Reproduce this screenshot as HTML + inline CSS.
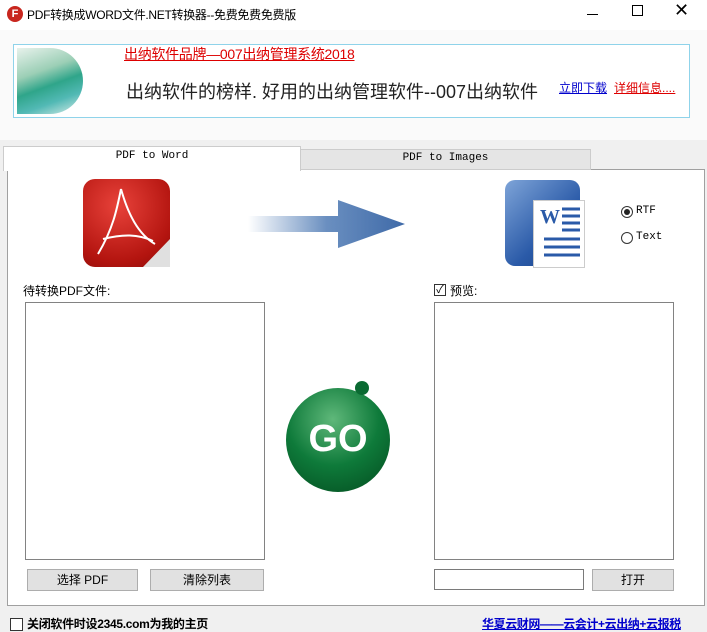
<!DOCTYPE html>
<html><head><meta charset="utf-8"><style>
*{margin:0;padding:0;box-sizing:border-box}
body{width:707px;height:630px;background:#f0f0f0;position:relative;overflow:hidden;font-family:"Liberation Sans","Noto Sans CJK SC",sans-serif;font-size:12px;color:#000}
.a{position:absolute}
.mono{font-family:"Liberation Mono","Noto Sans CJK SC",monospace}
.btn{position:absolute;background:#e1e1e1;border:1px solid #adadad;text-align:center;line-height:20px;font-size:12px}
.box{position:absolute;background:#fff;border:1px solid #828282}
</style></head><body>
<div class="a" style="left:0;top:0;width:707px;height:30px;background:#fff"></div>
<div class="a" style="left:7px;top:6px;width:16px;height:16px;border-radius:50%;background:#c8261e;color:#fff;font-size:11px;font-weight:bold;text-align:center;line-height:16px">F</div>
<div class="a" style="left:27px;top:6px;font-size:12px;letter-spacing:-0.3px">PDF转换成WORD文件.NET转换器--免费免费免费版</div>
<div class="a" style="left:587px;top:14px;width:11px;height:1px;background:#000"></div>
<div class="a" style="left:632px;top:5px;width:11px;height:11px;border:1px solid #000"></div>
<div class="a" style="left:674px;top:0px;font-size:18px;font-weight:300">✕</div>
<div class="a" style="left:0;top:30px;width:707px;height:110px;background:#fafafa"></div>
<div class="a" style="left:13px;top:44px;width:677px;height:74px;border:1px solid #8fd3ea;background:#fff"></div>
<div class="a" style="left:17px;top:48px;width:66px;height:66px;background:linear-gradient(160deg,#e8f2ec 0%,#9ccfb6 35%,#2fa58a 55%,#52b9b5 75%,#dceeea 100%);border-radius:0 33px 33px 0"></div>
<div class="a" style="left:124px;top:44px;font-size:14px;color:#d00;text-decoration:underline;letter-spacing:-0.3px">出纳软件品牌—007出纳管理系统2018</div>
<div class="a" style="left:126px;top:78px;font-size:18px;color:#222">出纳软件的榜样. 好用的出纳管理软件--007出纳软件</div>
<div class="a" style="left:559px;top:79px;font-size:12px;color:#00c;text-decoration:underline">立即下载</div>
<div class="a" style="left:614px;top:79px;font-size:12px;color:#d00;text-decoration:underline">详细信息....</div>
<div class="a" style="left:7px;top:169px;width:698px;height:437px;border:1px solid #a0a0a0;background:#fff"></div>
<div class="a" style="left:300px;top:149px;width:291px;height:21px;background:#e5e5e5;border:1px solid #ccc"></div>
<div class="a mono" style="left:300px;top:152px;width:291px;text-align:center;font-size:11px">PDF to Images</div>
<div class="a" style="left:3px;top:146px;width:298px;height:25px;background:#fff;border:1px solid #ccc;border-bottom:none"></div>
<div class="a mono" style="left:3px;top:150px;width:298px;text-align:center;font-size:11px">PDF to Word</div>
<div class="a" style="left:83px;top:179px;width:87px;height:88px;border-radius:12px;background:radial-gradient(circle at 40% 30%,#e8423a,#b3140f 70%,#8a0d0a)"></div>
<svg class="a" style="left:83px;top:179px" width="87" height="88"><path d="M38 10 C34 30 30 50 15 75 M38 10 C45 35 55 55 72 65 M20 60 C40 55 55 55 70 62" stroke="#fff" stroke-width="2" fill="none"/><path d="M60 88 L87 60 L87 88Z" fill="#e0e0e0"/></svg>
<svg class="a" style="left:248px;top:200px" width="160" height="50"><defs><linearGradient id="g" x1="0" x2="1"><stop offset="0" stop-color="#fff"/><stop offset="0.5" stop-color="#6a8fc0"/><stop offset="1" stop-color="#3f6aa8"/></linearGradient></defs><path d="M0 16 L90 16 L90 0 L157 24 L90 48 L90 32 L0 32Z" fill="url(#g)"/></svg>
<div class="a" style="left:505px;top:180px;width:75px;height:86px;border-radius:10px;background:linear-gradient(135deg,#7ea4d8,#2a5aa8 60%,#1b3f80)"></div>
<div class="a" style="left:533px;top:200px;width:52px;height:68px;background:#fff;border:1px solid #ccc"></div>
<div class="a" style="left:540px;top:206px;font-weight:bold;font-size:20px;color:#2a5aa8;font-family:'Liberation Serif',serif">W</div>
<svg class="a" style="left:540px;top:205px" width="44" height="60"><g stroke="#2a5aa8" stroke-width="3"><path d="M22 4h18M22 11h18M22 18h18M22 25h18M4 34h36M4 42h36M4 50h36"/></g></svg>
<div class="a" style="left:621px;top:206px;width:12px;height:12px;border:1px solid #333;border-radius:50%;background:#fff"></div>
<div class="a" style="left:624px;top:209px;width:6px;height:6px;border-radius:50%;background:#222"></div>
<div class="a mono" style="left:636px;top:205px;font-size:11px">RTF</div>
<div class="a" style="left:621px;top:232px;width:12px;height:12px;border:1px solid #333;border-radius:50%;background:#fff"></div>
<div class="a mono" style="left:636px;top:231px;font-size:11px">Text</div>
<div class="a" style="left:23px;top:282px;font-size:12px">待转换PDF文件:</div>
<div class="a" style="left:434px;top:284px;width:12px;height:12px;border:1px solid #333;background:#fff;font-size:11px;line-height:10px;text-align:center">✓</div>
<div class="a" style="left:450px;top:282px;font-size:12px">预览:</div>
<div class="box" style="left:25px;top:302px;width:240px;height:258px"></div>
<div class="box" style="left:434px;top:302px;width:240px;height:258px"></div>
<div class="a" style="left:286px;top:388px;width:104px;height:104px;border-radius:50%;background:radial-gradient(circle at 45% 30%,#5fb87a,#0e7a3a 50%,#034a1e)"></div>
<div class="a" style="left:355px;top:381px;width:14px;height:14px;border-radius:50%;background:#0a6a32"></div>
<div class="a" style="left:286px;top:418px;width:104px;text-align:center;color:#fff;font-size:38px;font-weight:bold">GO</div>
<div class="btn" style="left:27px;top:569px;width:111px;height:22px">选择 PDF</div>
<div class="btn" style="left:150px;top:569px;width:114px;height:22px">清除列表</div>
<div class="a" style="left:434px;top:569px;width:150px;height:21px;border:1px solid #7a7a7a;background:#fff"></div>
<div class="btn" style="left:592px;top:569px;width:82px;height:22px">打开</div>
<div class="a" style="left:10px;top:618px;width:13px;height:13px;border:1px solid #333;background:#fff"></div>
<div class="a" style="left:27px;top:615px;font-size:12px;font-weight:bold;letter-spacing:-0.3px">关闭软件时设2345.com为我的主页</div>
<div class="a" style="left:482px;top:615px;font-size:12px;font-weight:bold;color:#00c;text-decoration:underline;letter-spacing:-0.4px">华夏云财网——云会计+云出纳+云报税</div>
</body></html>
